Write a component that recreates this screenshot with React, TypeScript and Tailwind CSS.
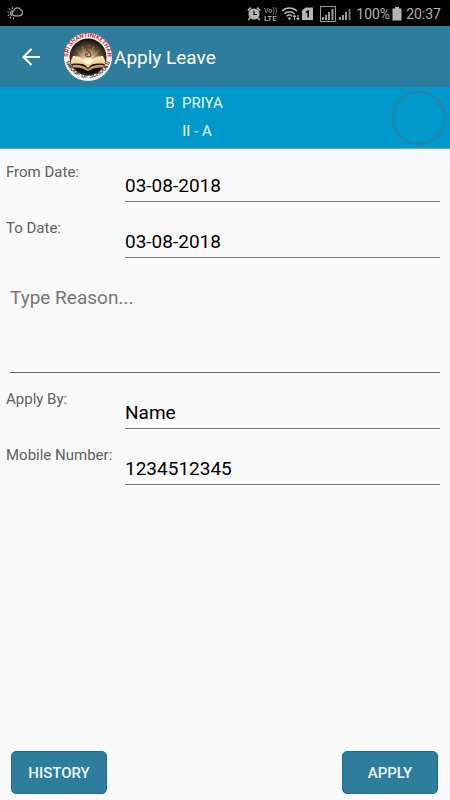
import { useState } from "react";
import type { ReactNode } from "react";

function WeatherIcon() {
  return (
    <svg className="h-4 w-4" viewBox="0 0 16 16" fill="none" stroke="#a8a8a8" strokeWidth="1.2" strokeLinecap="round">
      <path d="M7.500 10.800a2.700 2.700 0 0 1-.6-5.200A3.700 3.700 0 0 1 13.600 4.500a3.300 3.300 0 0 1-1.300 6.300z" />
      <path d="M5 5.800a2.700 2.700 0 0 0-.3 4.600M5.300 2.400v1M2.200 3.800l.8.8M.8 7h1M1.200 10.500l.9-.5M3.200 13l.5-.9M6.500 13.800v-1" />
    </svg>
  );
}

function AlarmIcon() {
  return (
    <svg className="h-4 w-4" viewBox="0 0 16 16" fill="none">
      <circle cx="7" cy="8" r="5.600" fill="#b4b4b4" />
      <path d="M.8 4.500 4 1.700M13.200 4.500 10 1.700M3 12l-1.500 2M11 12l1.500 2" stroke="#b4b4b4" strokeWidth="1.700" />
      <path d="M7 4.800v3.700h3" stroke="#000" strokeWidth="1.200" />
    </svg>
  );
}

function VolteIcon() {
  return (
    <svg className="h-4 w-4" viewBox="0 0 16 16" fill="#b4b4b4" fontFamily="Roboto, sans-serif">
      <text x="0" y="7" fontSize="7">Vo))</text>
      <text x="0" y="15" fontSize="8" fontWeight="500">LTE</text>
    </svg>
  );
}

function WifiIcon() {
  return (
    <svg className="h-4 w-5" viewBox="0 0 20 16" fill="none" stroke="#b4b4b4" strokeWidth="1.500">
      <path d="M1 5a11 11 0 0 1 15 0M3.400 7.800a7.400 7.400 0 0 1 10.200 0M5.800 10.300a4 4 0 0 1 5.400 0" />
      <circle cx="8.500" cy="12.500" r="1.300" fill="#b4b4b4" stroke="none" />
      <path d="M13.500 14V9.500M12 11l1.500-1.700L15 11M17 9v4.500M15.500 12l1.500 1.700 1.500-1.700" strokeWidth="1.100" />
    </svg>
  );
}

function SimIcon() {
  return (
    <svg className="h-4 w-3" viewBox="0 0 12 16">
      <path d="M3.500 1.500H11v12.500H0V4.500z" fill="#b4b4b4" />
      <path d="M4 6.300 6.200 5v6.500" fill="none" stroke="#000" strokeWidth="1.500" />
    </svg>
  );
}

function SignalIcon({ framed = false }: { framed?: boolean }) {
  return (
    <svg className="h-4 w-4" viewBox="0 0 16 16" fill="#9c9c9c">
      {framed && <path d="M.5.500h15v15H.500z" fill="none" stroke="#9c9c9c" />}
      <path d="M2 11h2v3H2zM5 9h2v5H5zM8 6h2v8H8z" />
      <path d="M11.500 3h2v11h-2z" fill={framed ? "#9c9c9c" : "#777"} />
    </svg>
  );
}

function BatteryIcon() {
  return (
    <svg className="h-4 w-3" viewBox="0 0 12 16" fill="#b4b4b4">
      <path d="M4 1h4v1.500h2.500v12h-9v-12H4z" />
    </svg>
  );
}

function SchoolLogo() {
  return (
    <svg className="h-12 w-12 overflow-visible" viewBox="0 0 48 48" role="img" aria-label="School logo">
      <defs>
        <radialGradient id="glow" cx="50%" cy="60%" r="58%">
          <stop offset="0" stopColor="#fff3c4" />
          <stop offset=".3" stopColor="#cdb079" />
          <stop offset=".65" stopColor="#5d4933" />
          <stop offset="1" stopColor="#14100e" />
        </radialGradient>
        <linearGradient id="page" x1="0" y1="0" x2="0" y2="1">
          <stop offset="0" stopColor="#f8e8b8" />
          <stop offset=".6" stopColor="#ecd095" />
          <stop offset="1" stopColor="#b88c4c" />
        </linearGradient>
        <path id="top-arc" d="M6.700 33.500A19.800 19.800 0 1 1 41.300 33.500" />
        <path id="bottom-arc" d="M1 22A23 23 0 0 0 47 22" />
      </defs>
      <circle cx="24" cy="24" r="24" fill="#fbf8f8" />
      <circle cx="24" cy="24" r="18.500" fill="url(#glow)" />
      <path d="M7 31h34a18.500 18.500 0 0 1-34 0z" fill="#120d0b" />
      <path d="M24 30 13 17M24 30l-6-17M24 30l6-17M24 30l11-13" stroke="#ffe9b0" strokeOpacity=".3" />
      <path d="M4 33c7-2 14-2 20 3 6-5 13-5 20-3l-1 2c-7-1-13-1-19 3-6-4-12-4-19-3z" fill="#c99b58" />
      <path d="M24 35C19 29 12 29 5 32l4-9c7 0 13 3 15 8 2-5 8-8 15-8l4 9c-7-3-14-3-19 3z" fill="url(#page)" />
      <path d="M24 34c-3-6-7-8-12-8M24 34c3-6 7-8 12-8" fill="none" stroke="#fff5d2" strokeWidth=".8" />
      <ellipse cx="24" cy="28" rx="5" ry="3" fill="#fff7da" fillOpacity=".8" />
      <path d="M26.500 15.500c-.8-2.300-4.200-1.800-4 .6.2 2.200 4.700 3.200 4.500 5.900-.3 2.300-5 2.800-5.700.2-.4-1.700 1.700-2.100 2.400-1" fill="none" stroke="#8c2a4a" strokeWidth="1.200" strokeLinecap="round" />
      <circle cx="25.500" cy="12.500" r=".7" fill="#d6542c" />
      <circle cx="22.500" cy="23" r="1" fill="#3c8a87" />
      <g fontFamily="Roboto, sans-serif" fontWeight="700">
        <text fill="#cf2a33" fontSize="6" textAnchor="middle">
          <textPath href="#top-arc" startOffset="50%">SRI SHANTINIKETHAN</textPath>
        </text>
        <text fill="#3a3636" fontSize="6" textAnchor="middle">
          <textPath href="#bottom-arc" startOffset="50%">GROUP OF SCHOOLS</textPath>
        </text>
      </g>
    </svg>
  );
}

function StatusBar() {
  return (
    <div className="flex h-[26px] items-center justify-between bg-black pr-[9px] pl-[7px] text-[#b4b4b4]">
      <WeatherIcon />
      <div className="flex items-center gap-px pt-px">
        <AlarmIcon />
        <VolteIcon />
        <WifiIcon />
        <SimIcon />
        <span className="w-1" />
        <SignalIcon framed />
        <SignalIcon />
        <span className="pl-[2px] text-sm leading-6">100%</span>
        <BatteryIcon />
        <span className="pl-[2px] text-sm leading-6">20:37</span>
      </div>
    </div>
  );
}

function Field({ id, label, children }: { id: string; label: string; children: ReactNode }) {
  return (
    <div className="flex h-14 items-start pr-[10px] pl-[6px]">
      <label htmlFor={id} className="w-[119px] shrink-0 pt-[11px] text-[15px] leading-6 whitespace-nowrap text-[#606060]">
        {label}
      </label>
      {children}
    </div>
  );
}

const inputClass =
  "mt-5 h-[33px] min-w-0 flex-1 rounded-none border-b border-[#777] bg-transparent text-[19px] leading-7 text-black outline-none";

const buttonClass =
  "h-[43px] w-24 rounded-[5px] border border-[#14718f] bg-[#2f7d9c] pt-[2px] text-[15px] font-medium text-[#eef6fa]";

export default function App() {
  const [fromDate, setFromDate] = useState("03-08-2018");
  const [toDate, setToDate] = useState("03-08-2018");
  const [reason, setReason] = useState("");
  const [applyBy, setApplyBy] = useState("Name");
  const [mobile, setMobile] = useState("1234512345");

  return (
    <div className="flex min-h-screen flex-col bg-[#fafafa] font-[Roboto,sans-serif]">
      <StatusBar />

      <header className="flex h-[61px] items-center bg-[#2f7d9c] pl-5 text-white">
        <button type="button" aria-label="Back" className="mr-5 flex h-6 w-6 items-center justify-center">
          <svg className="h-6 w-6" viewBox="0 0 24 24" fill="none" stroke="currentColor" strokeWidth="2">
            <path d="M20 12H3.500M11.500 4 3.500 12l8 8" />
          </svg>
        </button>
        <SchoolLogo />
        <h1 className="pt-[2px] pl-[2px] text-[19px] leading-7">Apply Leave</h1>
      </header>

      {/* Student banner */}
      <section className="flex h-[62px] items-center border-b border-[#5fa9cb] bg-[#0099cc] pr-1 text-[15px] text-[#eef8fc]">
        <div className="flex-1 pr-1 pb-[2px] text-center leading-7">
          <p className="whitespace-pre">B  PRIYA</p>
          <p className="pl-[6px]">II - A</p>
        </div>
        <svg className="h-[54px] w-[54px]" viewBox="0 0 54 54" fill="none" stroke="#3d7b94" strokeWidth="1.500">
          <circle cx="27" cy="27" r="26.200" />
        </svg>
      </section>

      <form className="flex flex-1 flex-col" onSubmit={(e) => e.preventDefault()}>
        <Field id="from" label="From Date:">
          <input id="from" className={inputClass} value={fromDate} onChange={(e) => setFromDate(e.target.value)} />
        </Field>
        <Field id="to" label="To Date:">
          <input id="to" className={inputClass} value={toDate} onChange={(e) => setToDate(e.target.value)} />
        </Field>

        <div className="px-[10px] pt-5 pb-[3px]">
          <textarea
            aria-label="Type Reason"
            placeholder="Type Reason..."
            className="block h-[92px] w-full resize-none rounded-none border-b border-[#666] bg-transparent pt-[3px] text-[19px] leading-7 outline-none placeholder:text-[#777]"
            value={reason}
            onChange={(e) => setReason(e.target.value)}
          />
        </div>

        <Field id="applyBy" label="Apply By:">
          <input id="applyBy" className={inputClass} value={applyBy} onChange={(e) => setApplyBy(e.target.value)} />
        </Field>
        <Field id="mobile" label="Mobile Number:">
          <input id="mobile" type="tel" className={inputClass} value={mobile} onChange={(e) => setMobile(e.target.value)} />
        </Field>

        <div className="mt-auto flex justify-between pt-4 pr-3 pb-[6px] pl-[11px]">
          <button type="button" className={buttonClass}>
            HISTORY
          </button>
          <button type="submit" className={buttonClass}>
            APPLY
          </button>
        </div>
      </form>
    </div>
  );
}
